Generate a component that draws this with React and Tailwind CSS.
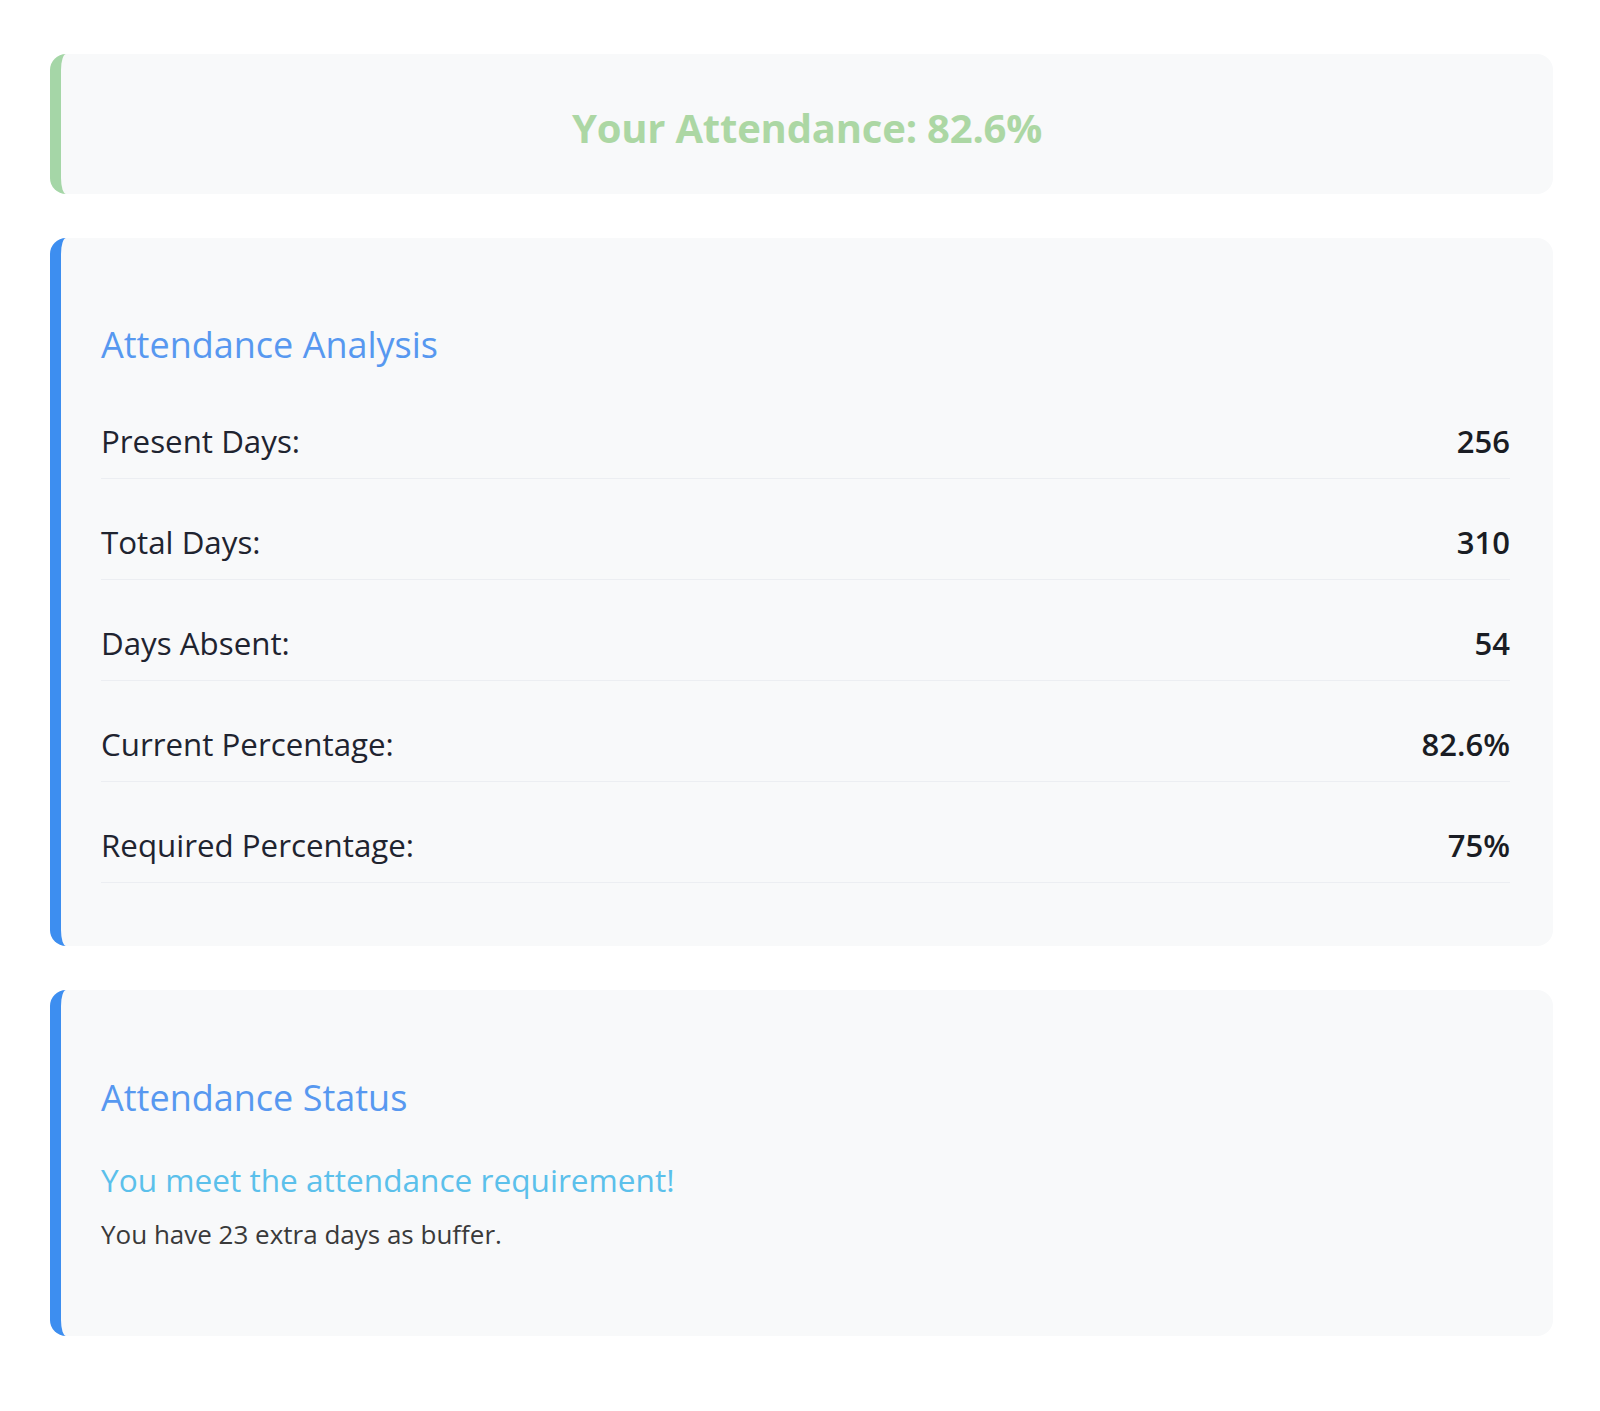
import React from "react";

const rows = [
    { label: "Present Days:", value: "256" },
    { label: "Total Days:", value: "310" },
    { label: "Days Absent:", value: "54" },
    { label: "Current Percentage:", value: "82.6%" },
    { label: "Required Percentage:", value: "75%" },
];

const font = { fontFamily: '"Open Sans", "Noto Sans", Arial, sans-serif' };

const App = () => {
    return (
        <div className="min-h-screen bg-white pt-[54px] pl-[50px] pr-[47px] pb-[78px]" style={font}>
            <div className="flex flex-col gap-[44px]">
                {/* Summary */}
                <div className="h-[140px] bg-[#f8f9fa] rounded-[16px] border-l-[11px] border-[#a5d6a7] flex items-center justify-center pt-[8px]">
                    <h2 className="text-[40px] leading-[56px] font-bold text-[#acd7a4] tracking-[-0.2px]">
                        Your Attendance: 82.6%
                    </h2>
                </div>

                {/* Analysis */}
                <div className="bg-[#f8f9fa] rounded-[16px] border-l-[11px] border-[#3d8ef0] pl-10 pr-[43px] pt-[85px] pb-[63px]">
                    <h3 className="text-[36px] leading-[44px] text-[#5798f0] mb-[39px]">Attendance Analysis</h3>
                    <div className="flex flex-col gap-[28px]">
                        {rows.map((r) => (
                            <div key={r.label} className="flex justify-between items-center pt-[13px] pb-[14px] border-b border-[#eceef2]">
                                <span className="text-[31.3px] leading-[45px] text-[#1f2430]">{r.label}</span>
                                <span className="text-[31px] leading-[45px] font-semibold text-[#1a1d24]">{r.value}</span>
                            </div>
                        ))}
                    </div>
                </div>

                {/* Status */}
                <div className="bg-[#f8f9fa] rounded-[16px] border-l-[11px] border-[#3d8ef0] px-10 pt-[86px] pb-[84px]">
                    <h3 className="text-[36px] leading-[44px] text-[#5798f0] mb-[36px]">Attendance Status</h3>
                    <p className="text-[31.6px] leading-[48px] text-[#5bc0eb] mb-[12px]">You meet the attendance requirement!</p>
                    <p className="text-[26px] leading-[36px] text-[#3a3a3a]">You have 23 extra days as buffer.</p>
                </div>
            </div>
        </div>
    );
};

export default App;
